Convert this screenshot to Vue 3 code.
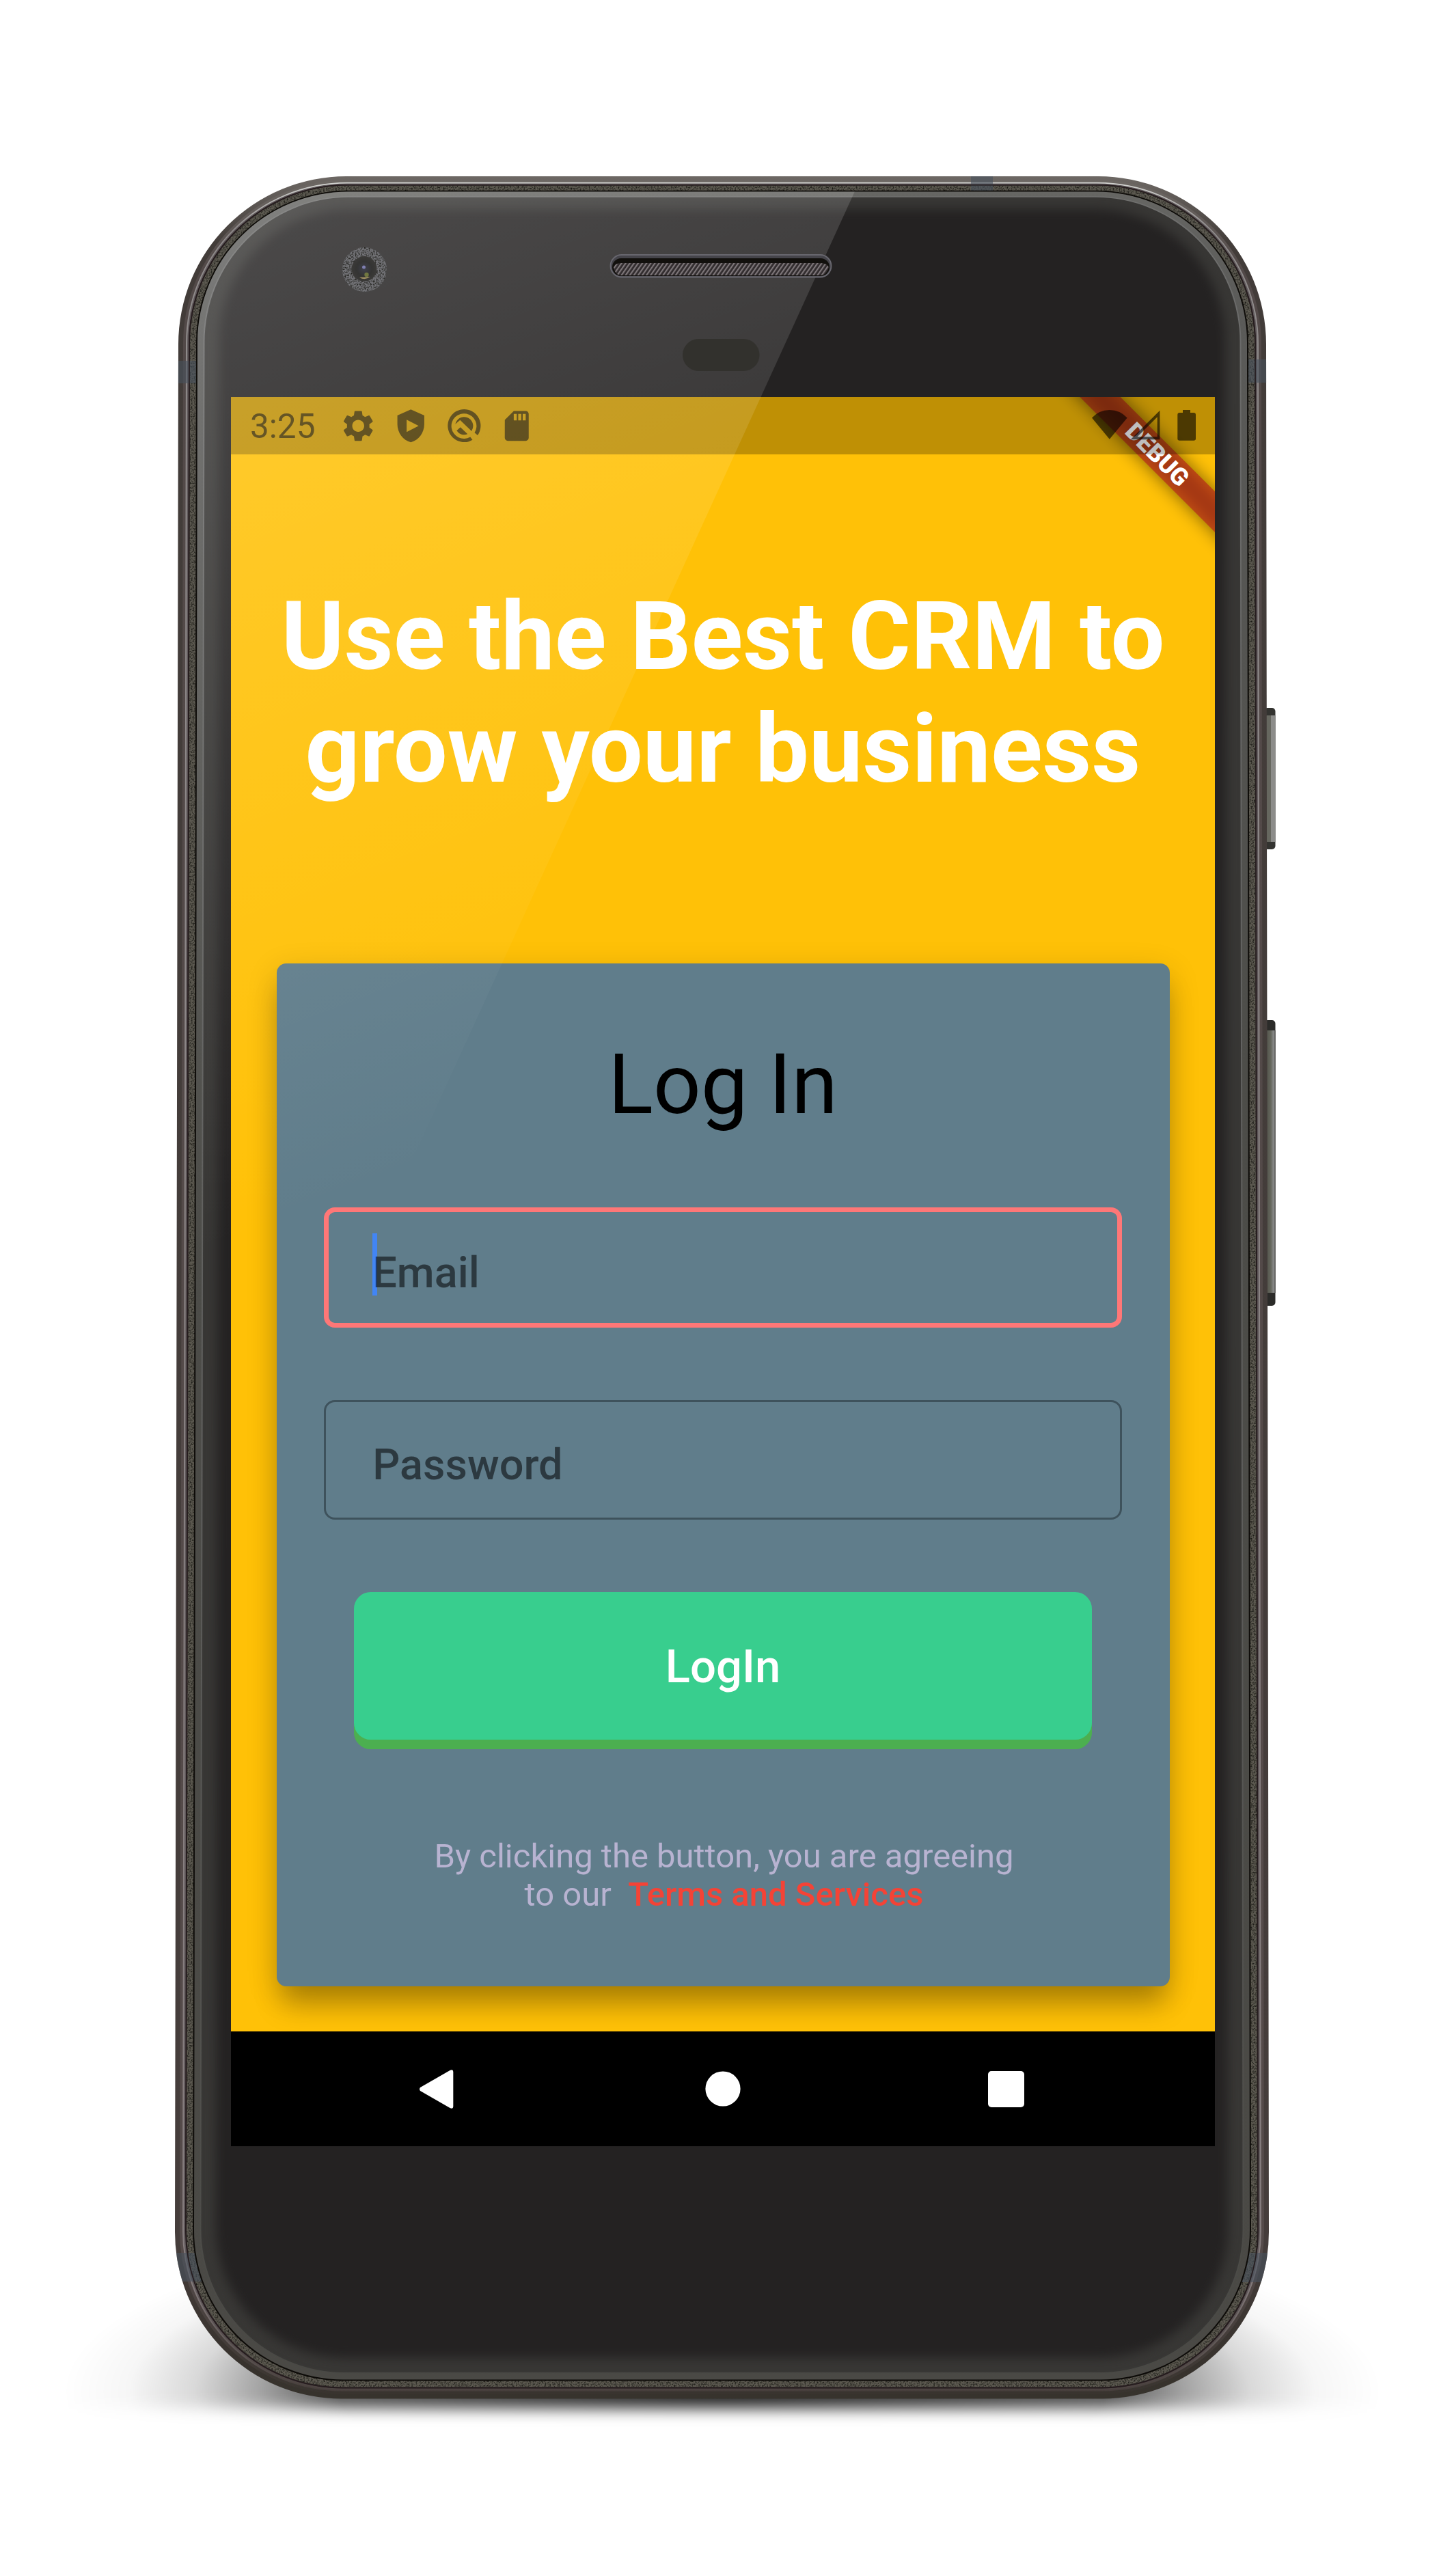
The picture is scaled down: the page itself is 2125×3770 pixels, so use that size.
<script setup>
// Closed outline of the handset; the body is slightly wider at its foot than at its head.
const outline = (inset, rTop = 246, rBottom = 244) => {
  const lt = 261 + inset
  const lb = 256 + inset
  const rt = 1853 - inset
  const rb = 1857 - inset
  const t = 258 + inset * 0.8
  const b = 3510.5 - inset
  const a = rTop - inset * 0.9
  const c = rBottom - inset * 0.9
  return `M${lt + a} ${t}H${rt - a}A${a} ${a} 0 0 1 ${rt} ${t + a}L${rb} ${b - c}A${c} ${c} 0 0 1 ${rb - c} ${b}H${lb + c}A${c} ${c} 0 0 1 ${lb} ${b - c}L${lt} ${t + a}A${a} ${a} 0 0 1 ${lt + a} ${t}Z`
}

const bands = [
  { x: 250, y: 528, w: 40, h: 33 },
  { x: 1820, y: 526, w: 40, h: 34 },
  { x: 1421, y: 250, w: 32, h: 30 },
  { x: 250, y: 3297, w: 50, h: 42 },
  { x: 1812, y: 3297, w: 50, h: 43 },
]
</script>

<template>
  <main class="stage">
    <svg class="layer" viewBox="0 0 2125 3770" aria-hidden="true">
      <defs>
        <radialGradient id="ground">
          <stop offset="0" stop-opacity=".85" />
          <stop offset=".58" stop-opacity=".66" />
          <stop offset=".7" stop-opacity=".36" />
          <stop offset=".8" stop-opacity=".15" />
          <stop offset=".9" stop-opacity=".035" />
          <stop offset="1" stop-opacity="0" />
        </radialGradient>
        <filter id="soft11" x="-10%" y="-10%" width="120%" height="120%" color-interpolation-filters="sRGB">
          <feGaussianBlur stdDeviation="11" />
        </filter>
        <filter id="soft8" x="-5%" y="-5%" width="110%" height="110%" color-interpolation-filters="sRGB">
          <feGaussianBlur stdDeviation="8" />
        </filter>
        <mask id="floor" maskUnits="userSpaceOnUse" x="0" y="3000" width="2125" height="700">
          <rect x="-60" y="2900" width="2245" height="625" fill="#fff" filter="url(#soft11)" />
        </mask>
        <linearGradient id="metal" x1="0" y1="0" x2="0" y2="1">
          <stop offset="0" stop-color="#6d6864" />
          <stop offset=".03" stop-color="#423c39" />
          <stop offset=".93" stop-color="#453d3b" />
          <stop offset=".985" stop-color="#37322d" />
          <stop offset="1" stop-color="#37332d" />
        </linearGradient>
        <linearGradient id="brushed" x1="0" y1="0" x2="0" y2="1">
          <stop offset="0" stop-color="#6d6864" />
          <stop offset=".04" stop-color="#524948" />
          <stop offset=".94" stop-color="#554b4a" />
          <stop offset="1" stop-color="#39342f" />
        </linearGradient>
        <linearGradient id="sheen" x1="0" y1="0" x2="0" y2="1">
          <stop offset="0" stop-color="#d3d4d1" />
          <stop offset=".02" stop-color="#8f8b8b" />
          <stop offset=".95" stop-color="#857c7d" />
          <stop offset="1" stop-color="#463e3b" />
        </linearGradient>
        <linearGradient id="seam" x1="0" y1="0" x2="0" y2="1">
          <stop offset="0" stop-color="#5f585a" />
          <stop offset=".95" stop-color="#5f585a" />
          <stop offset="1" stop-color="#4c4341" />
        </linearGradient>
        <linearGradient id="rim" x1="0" y1="0" x2="0" y2="1">
          <stop offset="0" stop-color="#666663" />
          <stop offset=".05" stop-color="#5b5b59" />
          <stop offset=".4" stop-color="#4d4d49" />
          <stop offset="1" stop-color="#4a4945" />
        </linearGradient>
        <linearGradient id="lip" x1="0" y1="0" x2="0" y2="1">
          <stop offset="0" stop-color="#777" />
          <stop offset=".6" stop-color="#6b6b6b" />
          <stop offset="1" stop-color="#484844" />
        </linearGradient>
        <linearGradient id="key" x1="0" y1="0" x2="1" y2="0">
          <stop offset="0" stop-color="#4a4b43" />
          <stop offset=".6" stop-color="#64665c" />
          <stop offset=".85" stop-color="#8b8c8c" />
          <stop offset="1" stop-color="#4c4c4a" />
        </linearGradient>
        <filter id="grain" x="0" y="0" width="100%" height="100%" color-interpolation-filters="sRGB">
          <feTurbulence type="fractalNoise" baseFrequency=".45" numOctaves="2" seed="4" />
          <feColorMatrix values="0 0 0 0 .1  0 0 0 0 .1  0 0 0 0 .08  2.4 0 0 0 -1" />
          <feComposite in2="SourceGraphic" operator="in" result="specks" />
          <feMerge>
            <feMergeNode in="SourceGraphic" />
            <feMergeNode in="specks" />
          </feMerge>
        </filter>
        <clipPath id="body"><path :d="outline(0)" /></clipPath>
      </defs>

      <g mask="url(#floor)">
        <ellipse cx="1057" cy="3500" rx="965" ry="272" fill="url(#ground)" />
      </g>

      <g>
        <rect x="1850" y="1036" width="16.5" height="207" rx="5" fill="#333330" />
        <rect x="1850" y="1047" width="16.5" height="185" fill="#8c8c8a" />
        <rect x="1850" y="1047" width="10" height="185" fill="#66675f" />
        <rect x="1850" y="1493" width="16.5" height="418" rx="5" fill="#2b2b29" />
        <rect x="1850" y="1508" width="16.5" height="384" fill="url(#key)" />
      </g>

      <path :d="outline(0)" fill="url(#metal)" />
      <path :d="outline(7)" fill="url(#brushed)" />
      <path :d="outline(11)" fill="url(#sheen)" />
      <path :d="outline(13)" fill="url(#seam)" />
      <path :d="outline(15)" fill="#2b2022" />
      <path :d="outline(17)" fill="#5c5950" filter="url(#grain)" />
      <g clip-path="url(#body)">
        <g v-for="b in bands" :key="b.x + '-' + b.y">
          <rect :x="b.x" :y="b.y" :width="b.w" :height="b.h" fill="#48525d" fill-opacity=".6" />
        </g>
      </g>
      <path :d="outline(16)" fill="none" stroke="#251c1e" stroke-width="1.5" />
      <path :d="outline(26)" fill="#0d0b08" />
      <path :d="outline(28)" fill="url(#rim)" />
      <path :d="outline(36.5)" fill="url(#lip)" fill-opacity=".6" />
      <path :d="outline(38.5)" fill="#383735" />
      <path :d="outline(60)" fill="#242222" filter="url(#soft8)" />
    </svg>

    <section class="screen">
      <div class="app">
        <h1 class="title">Use the Best CRM to<br />grow your business</h1>
        <form class="card" @submit.prevent>
          <h2 class="heading">Log In</h2>
          <div class="field focused"><i class="caret"></i><span>Email</span></div>
          <div class="field"><span>Password</span></div>
          <button class="submit" type="submit">LogIn</button>
          <p class="legal">By clicking the button, you are agreeing<br />to our&nbsp; <b>Terms and Services</b></p>
        </form>
      </div>

      <svg class="ribbon" viewBox="0 0 260 260">
        <defs>
          <filter id="cast" x="-20%" y="-100%" width="140%" height="300%">
            <feGaussianBlur stdDeviation="13" />
          </filter>
        </defs>
        <g transform="translate(176 84) rotate(45)">
          <rect x="-180" y="-21" width="360" height="42" fill-opacity=".5" filter="url(#cast)" />
          <rect x="-180" y="-21" width="360" height="42" fill="#b71c1c" fill-opacity=".627" />
          <text x="0" y="12.6" text-anchor="middle">DEBUG</text>
        </g>
      </svg>

      <header class="status">
        <span class="clock">3:25</span>
        <div class="notices">
          <svg viewBox="0 0 24 24"><path d="M19.43 12.98c.04-.32.07-.64.07-.98s-.03-.66-.07-.98l2.11-1.65c.19-.15.24-.42.12-.64l-2-3.46c-.12-.22-.39-.3-.61-.22l-2.49 1c-.52-.4-1.08-.73-1.69-.98l-.38-2.65C14.46 2.18 14.25 2 14 2h-4c-.25 0-.46.18-.49.42l-.38 2.65c-.61.25-1.17.59-1.69.98l-2.49-1c-.23-.09-.49 0-.61.22l-2 3.46c-.13.22-.07.49.12.64l2.11 1.65c-.04.32-.07.65-.07.98s.03.66.07.98l-2.11 1.65c-.19.15-.24.42-.12.64l2 3.46c.12.22.39.3.61.22l2.49-1c.52.4 1.08.73 1.69.98l.38 2.65c.03.24.24.42.49.42h4c.25 0 .46-.18.49-.42l.38-2.65c.61-.25 1.17-.59 1.69-.98l2.49 1c.23.09.49 0 .61-.22l2-3.46c.12-.22.07-.49-.12-.64l-2.11-1.65zM12 16c-2.200 0-4-1.800-4-4s1.800-4 4-4 4 1.800 4 4-1.800 4-4 4z" /></svg>
          <svg viewBox="0 0 24 24"><path fill-rule="evenodd" d="M12 1 3 5v6c0 5.55 3.84 10.74 9 12 5.16-1.26 9-6.45 9-12V5zM9.2 7.9v8.2l8-4.1z" /></svg>
          <svg viewBox="0 0 24 24">
            <path d="M17.6 21.4A11 11 0 1 1 21 18.3l-2-1.7A8.4 8.4 0 1 0 16.1 19.400z" />
            <path d="M6.100 10.900A6 6 0 1 1 17.200 15L17 15.500 9.300 8.100z" />
            <path d="M9.500 12.900 14.300 17.500A6 6 0 0 1 7 15.200z" />
          </svg>
          <svg viewBox="0 0 24 24"><path fill-rule="evenodd" d="M18 2h-8L4.020 8 4 20c0 1.100.9 2 2 2h12c1.100 0 2-.9 2-2V4c0-1.100-.9-2-2-2zM10 4h2v4.300h-2zm3 0h2v4.300h-2zm3 0h2v4.300h-2z" /></svg>
        </div>
        <svg class="signals" viewBox="0 0 152 45">
          <path d="M0 11.500Q10.500 0 25.800 0T51.700 11.500L25.800 42.700z" />
          <path fill-rule="evenodd" d="M56.700 43.300 99.400.7V43.300zM66.500 39.300H95.700V10.200z" />
          <path d="M133 0h11v4h5q3 0 3 3v35q0 2.700-3 2.700h-20.700q-3 0-3-2.700V7q0-3 3-3h4.700z" />
        </svg>
      </header>

      <nav class="keys">
        <svg viewBox="0 0 50 57"><path d="M1 26 44.500 1Q49.300-1 49.300 3V54Q49.300 58 44.500 56L1 31Q-1 28.500 1 26z" /></svg>
        <svg viewBox="0 0 52 52"><circle cx="26" cy="26" r="25.600" /></svg>
        <svg viewBox="0 0 53 53"><rect width="53" height="53" rx="5" /></svg>
      </nav>
    </section>

    <svg class="layer over" viewBox="0 0 2125 3770" aria-hidden="true">
      <defs>
        <linearGradient id="gloss" gradientUnits="userSpaceOnUse" x1="400" y1="280" x2="905" y2="1610">
          <stop offset="0" stop-color="#fff" stop-opacity=".18" />
          <stop offset="1" stop-color="#fff" stop-opacity="0" />
        </linearGradient>
        <clipPath id="glass"><path :d="outline(28)" /></clipPath>
        <pattern id="mesh" width="5" height="5" patternUnits="userSpaceOnUse" patternTransform="rotate(35)">
          <rect width="5" height="5" fill="#302b2d" />
          <rect width="2.200" height="5" fill="#7d7679" />
        </pattern>
        <radialGradient id="lens">
          <stop offset="0" stop-color="#3f404c" />
          <stop offset=".6" stop-color="#343433" />
          <stop offset="1" stop-color="#3b3a38" />
        </radialGradient>
      </defs>
      <path d="M200 280H1251L338 2278H200Z" fill="url(#gloss)" clip-path="url(#glass)" />

      <circle cx="533.500" cy="394.500" r="32.500" fill="#727276" filter="url(#grain)" />
      <circle cx="533" cy="393.500" r="18.500" fill="url(#lens)" />
      <circle cx="532.500" cy="391" r="2.500" fill="#7f7fb0" />
      <circle cx="536.500" cy="402" r="3.200" fill="#717840" />
      <path d="M526 406q8 5 16-1-7 1-16 1z" fill="#a39364" />

      <rect x="893.500" y="373" width="323" height="32.500" rx="16.200" fill="#45444a" stroke="#68676f" stroke-width="1.800" />
      <rect x="896" y="378" width="318" height="26" rx="13" fill="#12100d" />
      <path d="M898 391Q900 385 909 385H1201Q1210 385 1213 391Q1210 403 1201 403H909Q900 403 898 391Z" fill="url(#mesh)" />
      <rect x="999" y="496" width="112.500" height="47" rx="23.500" fill="#32312d" />
    </svg>
  </main>
</template>

<style>
body {
  margin: 0;
  background: #fff;
}
</style>

<style scoped>
.stage {
  display: grid;
  width: 2125px;
  height: 3770px;
  overflow: hidden;
  background: #fff;
  font-family: Roboto, "Liberation Sans", sans-serif;
}
.layer {
  grid-area: 1 / 1;
  width: 2125px;
  height: 3770px;
}
.over {
  z-index: 2;
  pointer-events: none;
}
.screen {
  grid-area: 1 / 1;
  z-index: 1;
  display: grid;
  grid-template: 84px 2308px 168px / 1440px;
  width: 1440px;
  height: 2560px;
  margin: 581px 0 0 338px;
  overflow: hidden;
  background: #ffc107;
}
.app {
  grid-area: 1 / 1 / 3 / 2;
  display: flex;
  flex-direction: column;
  align-items: center;
  overflow: hidden;
}
.title {
  margin: 268px 0 0;
  color: #fff;
  font-size: 140px;
  font-weight: 700;
  line-height: 164.500px;
  text-align: center;
  white-space: nowrap;
}
.card {
  display: flex;
  flex-direction: column;
  align-items: center;
  box-sizing: border-box;
  width: 1307px;
  height: 1496.500px;
  margin-top: 232px;
  padding-top: 105px;
  border-radius: 14px;
  background: #607d8b;
  box-shadow: 0 34px 40px -8px rgba(0, 0, 0, .25), 0 12px 46px rgba(0, 0, 0, .16);
}
.heading {
  margin: 0 0 107.500px;
  color: #000;
  font-size: 122.500px;
  font-weight: 400;
  line-height: 144px;
}
.field {
  display: flex;
  align-items: center;
  box-sizing: border-box;
  width: 1167.500px;
  height: 174.500px;
  margin-bottom: 106.500px;
  padding-left: 68px;
  border: 3.500px solid #3e525c;
  border-radius: 16px;
  color: rgba(0, 0, 0, .54);
  font-size: 63px;
  font-weight: 500;
  line-height: 74px;
}
.field span {
  position: relative;
  top: 8px;
}
.field.focused {
  height: 176px;
  padding-left: 64px;
  border: 7px solid #ff7777;
}
.caret {
  width: 7px;
  height: 91px;
  margin: -9px -7px 0 0;
  background: #4285f4;
}
.submit {
  width: 1080px;
  height: 216px;
  padding: 2px 0 0;
  border: 0;
  border-radius: 24.500px;
  background: #38ce8e;
  box-shadow: 0 14px 0 #4caf50;
  color: #fff;
  font: 500 67px/78px Roboto, "Liberation Sans", sans-serif;
}
.legal {
  margin: 142.500px 0 0;
  padding-left: 3px;
  color: #b8b3d1;
  font-size: 49px;
  line-height: 56px;
  text-align: center;
  white-space: nowrap;
}
.legal b {
  color: #f44336;
  font-weight: 500;
}
.ribbon {
  grid-area: 1 / 1 / 3 / 2;
  justify-self: end;
  width: 260px;
  height: 260px;
}
.ribbon text {
  fill: #fff;
  font: 900 35.700px Roboto, "Liberation Sans", sans-serif;
}
.status {
  grid-area: 1 / 1;
  display: flex;
  align-items: center;
  box-sizing: border-box;
  padding: 0 28px;
  background: rgba(0, 0, 0, .25);
  color: rgba(0, 0, 0, .6);
  fill: rgba(0, 0, 0, .6);
}
.clock {
  width: 132px;
  padding-top: 2px;
  font-size: 49.500px;
  line-height: 58px;
}
.notices {
  display: flex;
  flex: 1;
  gap: 24.900px;
}
.notices svg {
  width: 52.500px;
  height: 52.500px;
}
.signals {
  width: 152px;
  height: 45px;
  margin-top: -1px;
}
.keys {
  grid-area: 3 / 1;
  display: grid;
  grid-template-columns: 50px 1fr 53px;
  align-items: center;
  justify-items: center;
  padding: 0 279.500px 0 276px;
  background: #000;
  fill: #fff;
}
.keys svg:nth-child(1) {
  width: 50px;
  height: 57px;
}
.keys svg:nth-child(2) {
  width: 52px;
  height: 52px;
  margin-left: 7px;
}
.keys svg:nth-child(3) {
  width: 53px;
  height: 53px;
}
</style>
